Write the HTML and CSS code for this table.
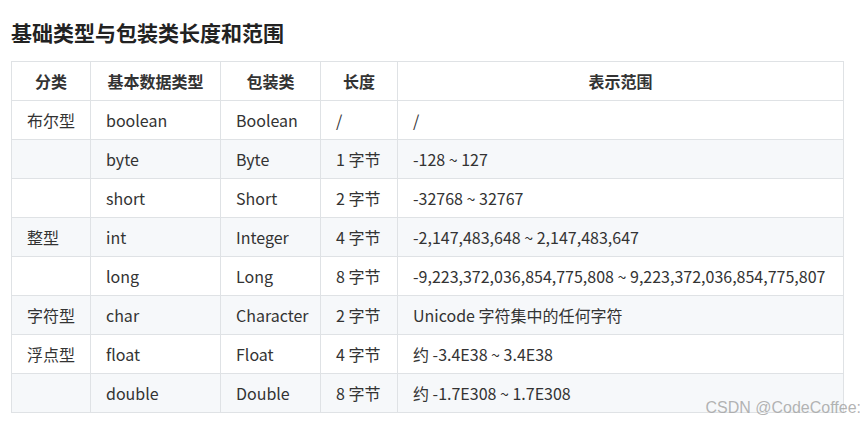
FILE: index.html
```html
<!DOCTYPE html>
<html lang="zh-CN">
<head>
<meta charset="utf-8">
<title>基础类型与包装类长度和范围</title>
<link rel="stylesheet" href="styles.css">
</head>
<body>
<div class="page">
  <h3 class="title">基础类型与包装类长度和范围</h3>
  <table class="types">
    <colgroup>
      <col class="c1"><col class="c2"><col class="c3"><col class="c4"><col class="c5">
    </colgroup>
    <thead>
      <tr><th>分类</th><th>基本数据类型</th><th>包装类</th><th>长度</th><th>表示范围</th></tr>
    </thead>
    <tbody>
      <tr><td>布尔型</td><td>boolean</td><td>Boolean</td><td>/</td><td>/</td></tr>
      <tr><td></td><td>byte</td><td>Byte</td><td>1 字节</td><td>-128 ~ 127</td></tr>
      <tr><td></td><td>short</td><td>Short</td><td>2 字节</td><td>-32768 ~ 32767</td></tr>
      <tr><td>整型</td><td>int</td><td>Integer</td><td>4 字节</td><td>-2,147,483,648 ~ 2,147,483,647</td></tr>
      <tr><td></td><td>long</td><td>Long</td><td>8 字节</td><td>-9,223,372,036,854,775,808 ~ 9,223,372,036,854,775,807</td></tr>
      <tr><td>字符型</td><td>char</td><td>Character</td><td>2 字节</td><td>Unicode 字符集中的任何字符</td></tr>
      <tr><td>浮点型</td><td>float</td><td>Float</td><td>4 字节</td><td>约 -3.4E38 ~ 3.4E38</td></tr>
      <tr><td></td><td>double</td><td>Double</td><td>8 字节</td><td>约 -1.7E308 ~ 1.7E308</td></tr>
    </tbody>
  </table>
  <div class="watermark">CSDN @CodeCoffee:</div>
</div>
</body>
</html>
```

FILE: styles.css
```css
html, body {
  margin: 0;
  padding: 0;
  background: #ffffff;
}
.page {
  position: relative;
  width: 865px;
  height: 423px;
  padding: 17px 0 0 11px;
  box-sizing: border-box;
  font-family: "Noto Sans CJK SC", "Noto Sans", sans-serif;
  color: #333333;
}
.title {
  margin: 0 0 14px 0;
  font-size: 21px;
  line-height: 30px;
  font-weight: 700;
  color: #222222;
}
.types {
  border-collapse: collapse;
  table-layout: fixed;
  width: 832px;
  font-size: 16px;
}
.c1 { width: 79px; }
.c2 { width: 130px; }
.c3 { width: 100px; }
.c4 { width: 77px; }
.c5 { width: 446px; }
.types th, .types td {
  border: 1px solid #dfe2e5;
  height: 39px;
  padding: 0 15px;
  box-sizing: border-box;
  line-height: 24px;
  text-align: left;
  white-space: nowrap;
  vertical-align: middle;
}
.types th {
  text-align: center;
  font-weight: 700;
  color: #333333;
}
.types tbody tr:nth-child(even) td {
  background: #f6f8fa;
}
.watermark {
  position: absolute;
  right: 4px;
  bottom: 6px;
  font-family: "Liberation Sans", Arial, sans-serif;
  font-size: 16px;
  color: rgba(160, 160, 160, 0.8);
}
```
